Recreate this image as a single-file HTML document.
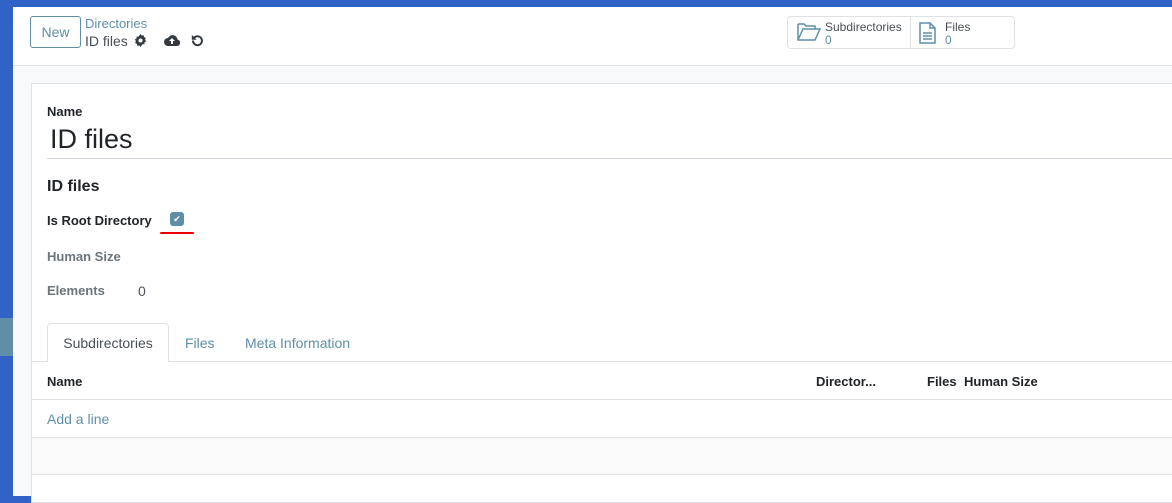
<!DOCTYPE html>
<html><head><style>
*{box-sizing:border-box;margin:0;padding:0}
body{width:1172px;height:496px;overflow:hidden;font-family:"Liberation Sans",sans-serif;font-size:13px;color:#212529;background:#3163c7;position:relative}
.abs{position:absolute}
#main{left:13px;top:7px;width:1159px;height:489px;background:#f8f9fa}
#hdr{left:13px;top:7px;width:1159px;height:59px;background:#fff;border-bottom:1px solid #dee2e6}
.btn{left:30px;top:16px;width:51px;height:32px;border:1px solid #5f8fa8;border-radius:3px;color:#5f8fa8;font-size:14px;text-align:center;line-height:30px}
.card{left:31px;top:83px;width:1150px;height:420px;background:#fff;border:1px solid #dee2e6}
.lbl{font-weight:bold;font-size:13px}
.muted{color:#6c757d}
.link{color:#5f8fa8}
.stat{top:16px;height:33px;background:#fff;border:1px solid #dee2e6}
</style></head><body>
<div class="abs" id="main"></div>
<div class="abs" style="left:0;top:318px;width:13px;height:38px;background:#5f8fa8"></div>
<div class="abs" id="hdr"></div>
<div class="abs btn">New</div>
<div class="abs link" style="left:85px;top:16px;font-size:13px">Directories</div>
<div class="abs" style="left:85px;top:33px;font-size:14px;color:#495057">ID files</div>
<svg class="abs" style="left:134px;top:34px" width="13" height="13" viewBox="0 0 16 16"><path fill="#343a40" d="M8 0l1.5 2 2.4-.6.4 2.4 2.3 1-1 2.2 1.4 2-2.1 1.2-.1 2.4-2.4-.1L8 16l-1.5-2-2.4.6-.4-2.4L1.4 11l1-2.2L1 6.8 3.1 5.6 3.2 3.2l2.4.1z"/><circle cx="8" cy="8" r="2.5" fill="#fff"/></svg>
<svg class="abs" style="left:164px;top:34px" width="16" height="12" viewBox="0 0 16 12"><path fill="#343a40" d="M4 12a4 4 0 010-8 5 5 0 019.5 1.5A3.3 3.3 0 0113 12z"/><path fill="#fff" d="M8 4l3 3H9v3H7V7H5z"/></svg>
<svg class="abs" style="left:191px;top:34px" width="13" height="13" viewBox="0 0 16 16"><path fill="none" stroke="#343a40" stroke-width="2.4" d="M4 4.5A5.5 5.5 0 112.5 8"/><path fill="#343a40" d="M1 1v6h6z"/></svg>
<div class="abs stat" style="left:787px;width:124px;border-radius:4px 0 0 4px"></div>
<div class="abs stat" style="left:910px;width:105px;border-radius:0 4px 4px 0"></div>
<svg class="abs" style="left:797px;top:22px" width="24" height="20" viewBox="0 0 24 20"><path fill="none" stroke="#5f8fa8" stroke-width="1.5" d="M1 2h6l2 2h9v3M1 2v16h17l5-11H6L1 18"/></svg>
<div class="abs" style="left:825px;top:20px;font-size:12px;color:#495057">Subdirectories</div>
<div class="abs link" style="left:825px;top:33px;font-size:12px">0</div>
<svg class="abs" style="left:919px;top:22px" width="18" height="22" viewBox="0 0 18 22"><path fill="none" stroke="#5f8fa8" stroke-width="1.5" d="M1 1h10l5 5v15H1zM11 1v5h5M4 11h9M4 14h9M4 17h9"/></svg>
<div class="abs" style="left:945px;top:20px;font-size:12px;color:#495057">Files</div>
<div class="abs link" style="left:945px;top:33px;font-size:12px">0</div>

<div class="abs card"></div>
<div class="abs lbl" style="left:47px;top:104px">Name</div>
<div class="abs" style="left:50px;top:124px;font-size:27px">ID files</div>
<div class="abs" style="left:47px;top:158px;width:1125px;border-top:1px solid #ced4da"></div>
<div class="abs" style="left:47px;top:178px;font-size:16px;font-weight:bold">ID files</div>
<div class="abs lbl" style="left:47px;top:213px">Is Root Directory</div>
<div class="abs" style="left:170px;top:212px;width:14px;height:14px;background:#5f8fa8;border-radius:3px;color:#fff;font-size:9px;text-align:center;line-height:14px">✔</div>
<div class="abs" style="left:160px;top:232px;width:34px;height:2px;background:#e00;border-radius:1px"></div>
<div class="abs lbl muted" style="left:47px;top:249px">Human Size</div>
<div class="abs lbl muted" style="left:47px;top:283px">Elements</div>
<div class="abs" style="left:138px;top:283px;font-size:14px;color:#495057">0</div>
<div class="abs" style="left:32px;top:361px;width:1140px;border-top:1px solid #dee2e6"></div>
<div class="abs" style="left:47px;top:323px;width:122px;height:39px;background:#fff;border:1px solid #dee2e6;border-bottom:none;border-radius:4px 4px 0 0;font-size:14px;text-align:center;line-height:38px;color:#495057">Subdirectories</div>
<div class="abs link" style="left:185px;top:335px;font-size:14px">Files</div>
<div class="abs link" style="left:245px;top:335px;font-size:14px">Meta Information</div>
<div class="abs lbl" style="left:47px;top:374px">Name</div>
<div class="abs lbl" style="left:816px;top:374px">Director...</div>
<div class="abs lbl" style="left:927px;top:374px">Files</div>
<div class="abs lbl" style="left:964px;top:374px">Human Size</div>
<div class="abs" style="left:32px;top:399px;width:1140px;border-top:1px solid #dee2e6"></div>
<div class="abs link" style="left:47px;top:411px;font-size:14px">Add a line</div>
<div class="abs" style="left:32px;top:437px;width:1140px;height:38px;background:#fbfbfb;border-top:1px solid #dee2e6;border-bottom:1px solid #dee2e6"></div>
</body></html>
